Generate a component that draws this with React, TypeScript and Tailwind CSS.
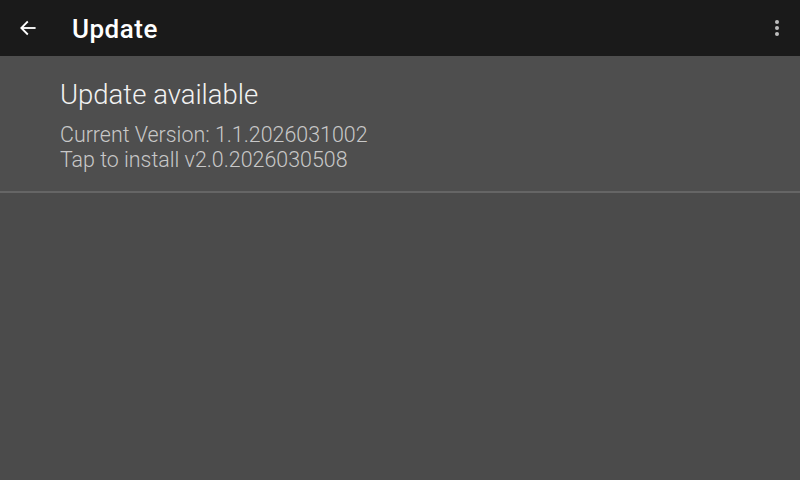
import React from "react";

export default function App() {
  return (
    <div className="w-[800px] h-[480px] bg-[#4b4b4b] flex flex-col overflow-hidden" style={{ fontFamily: "Roboto, 'Noto Sans', sans-serif" }}>
      <div className="h-[56px] bg-[#1a1a1a] flex items-center shrink-0">
        <div className="w-[56px] flex items-center justify-center">
          <svg width="20" height="20" viewBox="0 0 24 24" fill="none" stroke="#ffffff" strokeWidth="2.2" strokeLinecap="square">
            <path d="M20 12H5" />
            <path d="M11 5l-7 7 7 7" />
          </svg>
        </div>
        <div className="ml-[16px] text-white text-[26px] font-medium tracking-[0.5px] leading-[30px] pt-[2px]">Update</div>
        <div className="ml-auto w-[44px] flex flex-col items-center justify-center gap-[2px] pr-[2px]">
          <div className="w-[4px] h-[4px] rounded-full bg-[#bdbdbd]" />
          <div className="w-[4px] h-[4px] rounded-full bg-[#bdbdbd]" />
          <div className="w-[4px] h-[4px] rounded-full bg-[#bdbdbd]" />
        </div>
      </div>
      <div className="h-[135px] bg-[#4e4e4e] pl-[60px] pt-[22px] flex flex-col shrink-0">
        <div className="text-[27.5px] font-light leading-[34px] text-[#f2f2f2]">Update available</div>
        <div className="mt-[10px] text-[21.4px] font-light leading-[25px] text-[#c8c8c8]">Current Version: 1.1.2026031002</div>
        <div className="text-[21.4px] font-light leading-[25px] text-[#c8c8c8]">Tap to install v2.0.2026030508</div>
      </div>
      <div className="h-[2px] bg-[#656565] shrink-0" />
      <div className="flex-1" />
    </div>
  );
}
